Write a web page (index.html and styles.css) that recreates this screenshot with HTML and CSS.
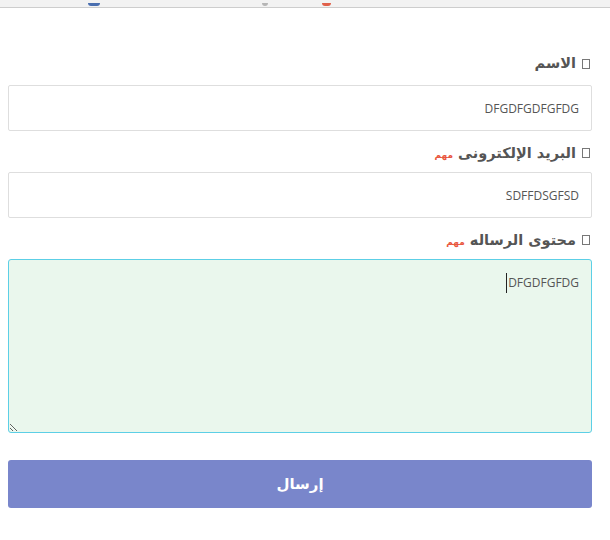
FILE: index.html
```html
<!DOCTYPE html>
<html lang="ar">
<head>
<meta charset="utf-8">
<link rel="stylesheet" href="styles.css">
</head>
<body>
<div class="topbar">
  <span class="tb-icon tb-blue"></span>
  <span class="tb-icon tb-gray"></span>
  <span class="tb-icon tb-red"></span>
</div>
<form class="contact" dir="rtl">
  <label class="field-label"><span class="ico"></span><span class="txt">الاسم</span></label>
  <input class="field" type="text" value="DFGDFGDFGFDG">
  <label class="field-label"><span class="ico"></span><span class="txt">البريد الإلكترونى</span><span class="req">مهم</span></label>
  <input class="field" type="text" value="SDFFDSGFSD">
  <label class="field-label"><span class="ico"></span><span class="txt">محتوى الرساله</span><span class="req">مهم</span></label>
  <div class="area-wrap">
    <textarea class="area">DFGDFGFDG</textarea>
    <span class="caret"></span>
  </div>
  <button class="send" type="button">إرسال</button>
</form>
</body>
</html>
```
FILE: styles.css
```css
html, body {
  margin: 0;
  padding: 0;
  background: #ffffff;
}
body {
  font-family: "DejaVu Sans", "Noto Sans", sans-serif;
}
.topbar {
  height: 7px;
  background: #f2f2f2;
  border-bottom: 1px solid #cdcdcd;
  position: relative;
}
.tb-icon {
  position: absolute;
  bottom: 1px;
  height: 3px;
  border-radius: 0 0 3px 3px;
}
.tb-blue { left: 88px; width: 12px; background: #4a6fb0; }
.tb-gray { left: 262px; width: 6px; background: #b5b5b5; }
.tb-red { left: 322px; width: 9px; background: #e0604a; }

.contact {
  width: 584px;
  margin-left: 8px;
  padding-top: 36px;
  display: flex;
  flex-direction: column;
}
.field-label {
  display: flex;
  align-items: center;
  height: 21px;
  margin: 11px 0 9px;
  padding-right: 2px;
  font-size: 14.5px;
  font-weight: bold;
  color: #555555;
}
.field-label:first-child {
  align-items: flex-start;
}
.ico {
  box-sizing: border-box;
  width: 8px;
  height: 10px;
  border: 1px solid #777;
  margin-left: 6px;
  margin-top: 1px;
}
.field-label:first-child .ico {
  margin-top: 4px;
}
.req {
  font-size: 9px;
  color: #e9573f;
  font-weight: bold;
  margin-right: 5px;
  margin-top: 4px;
}
.field {
  box-sizing: border-box;
  width: 100%;
  height: 46px;
  margin: 0;
  padding: 0 12px;
  border: 1px solid #dedede;
  border-radius: 2px;
  font-family: "Open Sans", sans-serif;
  font-size: 12px;
  color: #555;
  background: #fff;
  outline: none;
}
.area-wrap {
  position: relative;
  height: 174px;
}
.area {
  box-sizing: border-box;
  display: block;
  width: 100%;
  height: 174px;
  margin: 0;
  padding: 14px 12px;
  border: 1px solid #5ccfe6;
  border-radius: 3px;
  background: #eaf7ed;
  font-family: "Open Sans", sans-serif;
  font-size: 12px;
  color: #555;
  outline: none;
}
.caret {
  position: absolute;
  top: 14px;
  right: 85px;
  width: 1px;
  height: 20px;
  background: #222;
}
.send {
  margin-top: 27px;
  height: 48px;
  width: 100%;
  border: none;
  border-radius: 3px;
  background: #7986cb;
  color: #ffffff;
  font-family: "DejaVu Sans", sans-serif;
  font-weight: bold;
  font-size: 15px;
}
```
